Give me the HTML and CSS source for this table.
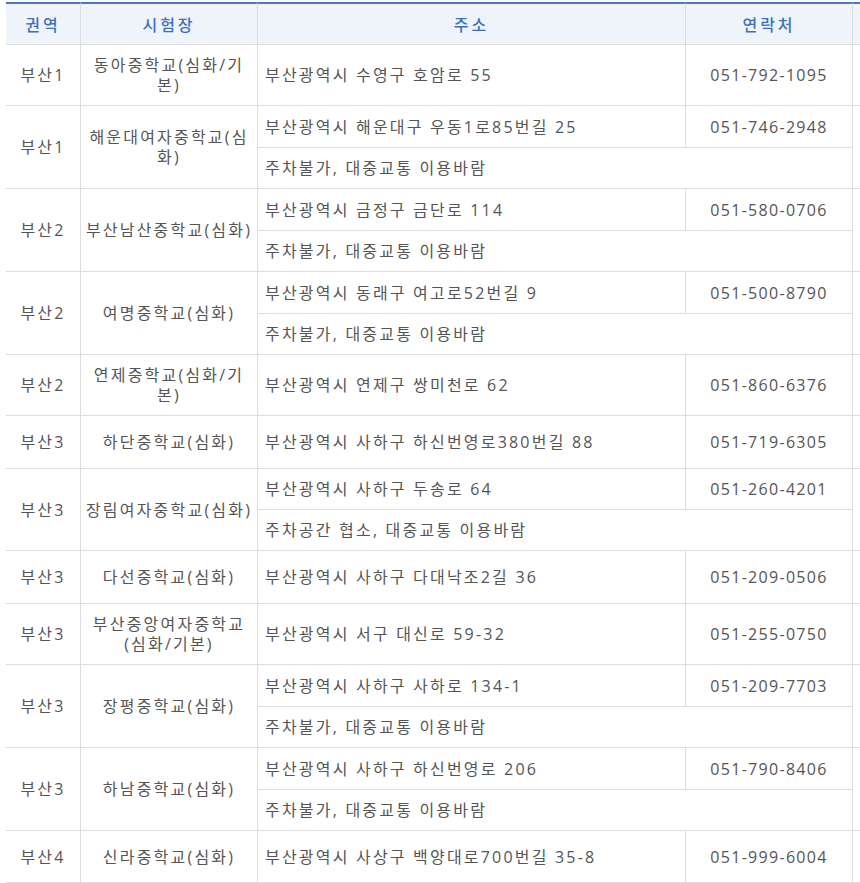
FILE: index.html
```html
<!DOCTYPE html>
<html lang="ko">
<head>
<meta charset="utf-8">
<title>시험장 안내</title>
<link rel="stylesheet" href="styles.css">
</head>
<body>
<div class="wrap">
<table class="grid">
  <thead>
    <tr class="head-row">
      <th class="c1">권역</th>
      <th class="c2">시험장</th>
      <th class="c3">주소</th>
      <th class="c4">연락처</th>
      <th class="c5"></th>
    </tr>
  </thead>
  <tbody>
    <tr class="h61">
      <td class="area">부산1</td>
      <td class="school">동아중학교(심화/기본)</td>
      <td class="addr">부산광역시 수영구 호암로 55</td>
      <td class="tel">051-792-1095</td>
      <td class="extra"></td>
    </tr>
    <tr class="h42">
      <td class="area" rowspan="2">부산1</td>
      <td class="school" rowspan="2">해운대여자중학교(심화)</td>
      <td class="addr">부산광역시 해운대구 우동1로85번길 25</td>
      <td class="tel">051-746-2948</td>
      <td class="extra" rowspan="2"></td>
    </tr>
    <tr class="h41">
      <td class="note" colspan="2">주차불가, 대중교통 이용바람</td>
    </tr>
    <tr class="h42">
      <td class="area" rowspan="2">부산2</td>
      <td class="school" rowspan="2">부산남산중학교(심화)</td>
      <td class="addr">부산광역시 금정구 금단로 114</td>
      <td class="tel">051-580-0706</td>
      <td class="extra" rowspan="2"></td>
    </tr>
    <tr class="h41">
      <td class="note" colspan="2">주차불가, 대중교통 이용바람</td>
    </tr>
    <tr class="h42">
      <td class="area" rowspan="2">부산2</td>
      <td class="school" rowspan="2">여명중학교(심화)</td>
      <td class="addr">부산광역시 동래구 여고로52번길 9</td>
      <td class="tel">051-500-8790</td>
      <td class="extra" rowspan="2"></td>
    </tr>
    <tr class="h41">
      <td class="note" colspan="2">주차불가, 대중교통 이용바람</td>
    </tr>
    <tr class="h61">
      <td class="area">부산2</td>
      <td class="school">연제중학교(심화/기본)</td>
      <td class="addr">부산광역시 연제구 쌍미천로 62</td>
      <td class="tel">051-860-6376</td>
      <td class="extra"></td>
    </tr>
    <tr class="h53">
      <td class="area">부산3</td>
      <td class="school">하단중학교(심화)</td>
      <td class="addr">부산광역시 사하구 하신번영로380번길 88</td>
      <td class="tel">051-719-6305</td>
      <td class="extra"></td>
    </tr>
    <tr class="h41">
      <td class="area" rowspan="2">부산3</td>
      <td class="school" rowspan="2">장림여자중학교(심화)</td>
      <td class="addr">부산광역시 사하구 두송로 64</td>
      <td class="tel">051-260-4201</td>
      <td class="extra" rowspan="2"></td>
    </tr>
    <tr class="h41">
      <td class="note" colspan="2">주차공간 협소, 대중교통 이용바람</td>
    </tr>
    <tr class="h53">
      <td class="area">부산3</td>
      <td class="school">다선중학교(심화)</td>
      <td class="addr">부산광역시 사하구 다대낙조2길 36</td>
      <td class="tel">051-209-0506</td>
      <td class="extra"></td>
    </tr>
    <tr class="h61">
      <td class="area">부산3</td>
      <td class="school">부산중앙여자중학교(심화/기본)</td>
      <td class="addr">부산광역시 서구 대신로 59-32</td>
      <td class="tel">051-255-0750</td>
      <td class="extra"></td>
    </tr>
    <tr class="h42">
      <td class="area" rowspan="2">부산3</td>
      <td class="school" rowspan="2">장평중학교(심화)</td>
      <td class="addr">부산광역시 사하구 사하로 134-1</td>
      <td class="tel">051-209-7703</td>
      <td class="extra" rowspan="2"></td>
    </tr>
    <tr class="h41">
      <td class="note" colspan="2">주차불가, 대중교통 이용바람</td>
    </tr>
    <tr class="h42">
      <td class="area" rowspan="2">부산3</td>
      <td class="school" rowspan="2">하남중학교(심화)</td>
      <td class="addr">부산광역시 사하구 하신번영로 206</td>
      <td class="tel">051-790-8406</td>
      <td class="extra" rowspan="2"></td>
    </tr>
    <tr class="h41">
      <td class="note" colspan="2">주차불가, 대중교통 이용바람</td>
    </tr>
    <tr class="h52">
      <td class="area">부산4</td>
      <td class="school">신라중학교(심화)</td>
      <td class="addr">부산광역시 사상구 백양대로700번길 35-8</td>
      <td class="tel">051-999-6004</td>
      <td class="extra"></td>
    </tr>
  </tbody>
</table>
</div>
</body>
</html>
```

FILE: styles.css
```css
html, body {
  margin: 0;
  padding: 0;
  background: #ffffff;
}

.wrap {
  width: 860px;
  box-sizing: border-box;
  padding: 2px 0 0 6px;
  overflow: hidden;
}

.grid {
  border-collapse: separate;
  border-spacing: 0;
  table-layout: fixed;
  width: 997px;
  font-family: "Open Sans", "Noto Sans CJK KR", sans-serif;
  font-size: 16px;
  line-height: 20px;
  letter-spacing: 2.2px;
  color: #555555;
}

.grid th,
.grid td {
  box-sizing: border-box;
  border-right: 1px solid #dddddd;
  border-bottom: 1px solid #dddddd;
  vertical-align: middle;
  font-weight: normal;
}

.grid th {
  padding: 0;
  background: #eef4f9;
  border-top: 2px solid #4a78b8;
  color: #3c70bd;
  font-family: "Noto Sans CJK KR", sans-serif;
  font-size: 16px;
  font-weight: 500;
  letter-spacing: 3px;
  text-align: center;
}

.head-row { height: 43px; }

.c1 { width: 75px; }
.c2 { width: 177px; }
.c3 { width: 428px; }
.c4 { width: 167px; }
.c5 { width: 150px; }

.grid td {
  padding: 10px 3px;
}

.area { text-align: center; }
.school { text-align: center; }
.grid td.addr,
.grid td.note {
  text-align: left;
  padding-left: 7px;
}
.grid td.tel {
  text-align: center;
  letter-spacing: 1.3px;
}

.h41 { height: 41px; }
.h42 { height: 42px; }
.h52 { height: 52px; }
.h53 { height: 53px; }
.h61 { height: 61px; }
```
